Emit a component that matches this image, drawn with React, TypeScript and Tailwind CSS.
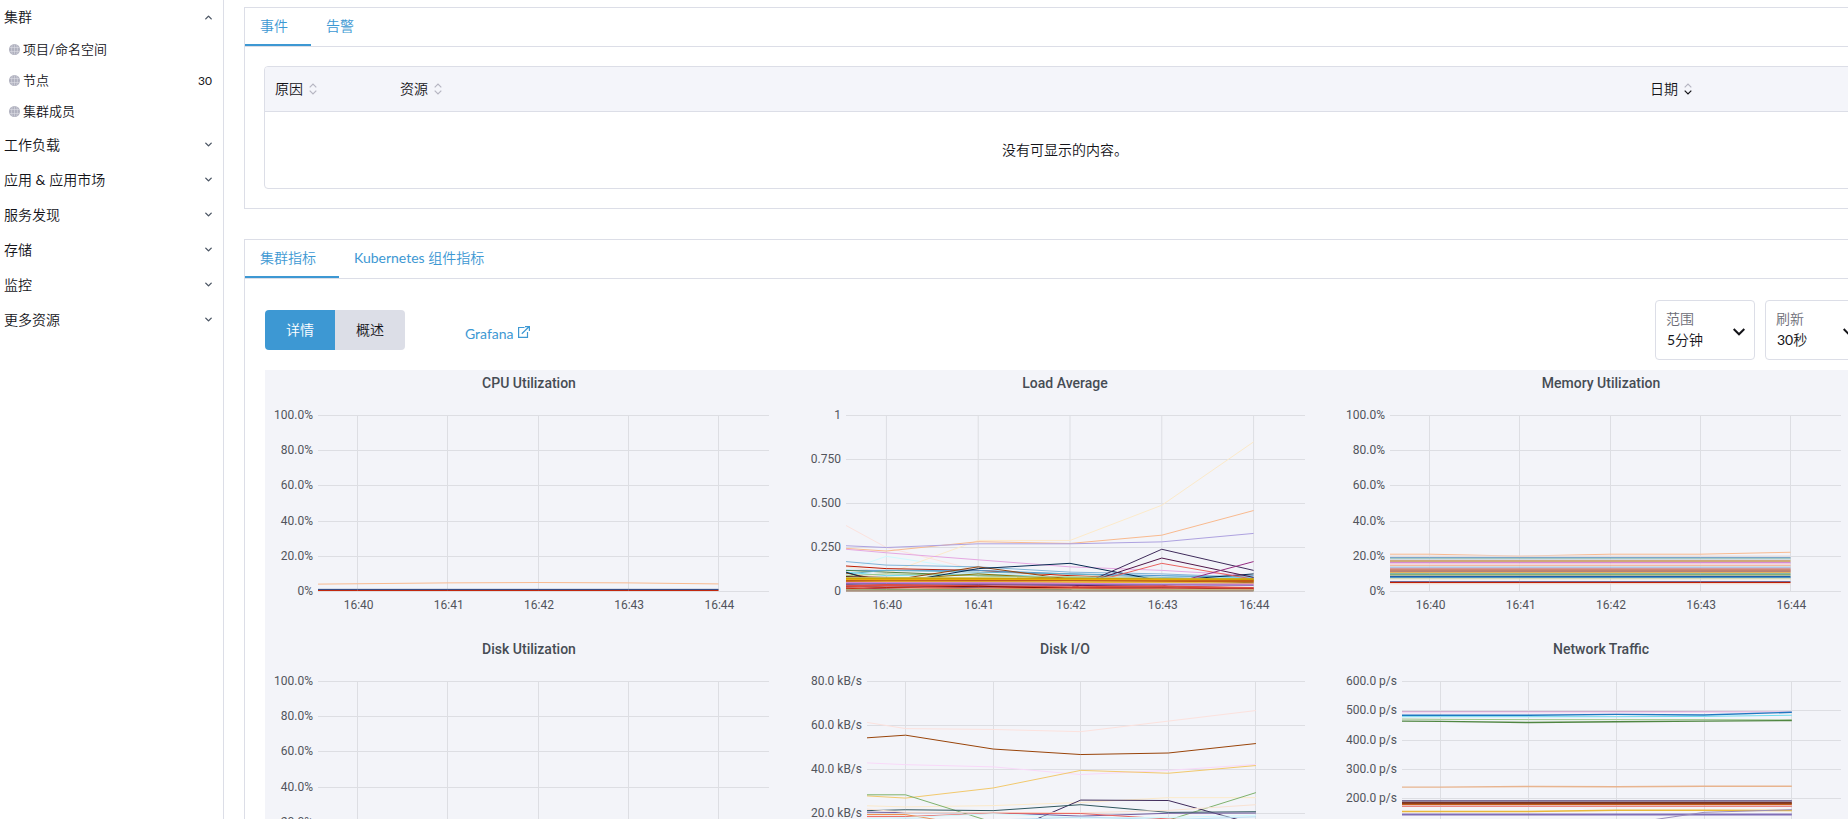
import { ChevronDown, ChevronUp } from "lucide-react";

type Series = { c: string; v: number[]; w?: number };
type ChartSpec = {
  title: string;
  labels: string[];
  max: number;
  gutter: string;
  series: Series[];
};

const TIMES = ["16:40", "16:41", "16:42", "16:43", "16:44"];
const TICKS = [88, 288, 488, 688, 888];
const POINTS = [0, ...TICKS];
const PLOT_HEIGHT = 176;
const PERCENT = ["100.0%", "80.0%", "60.0%", "40.0%", "20.0%", "0%"];

const flat = (c: string, v: number, w = 1): Series => ({ c, v: [v, v, v, v, v, v], w });

const CHARTS: ChartSpec[] = [
  {
    title: "CPU Utilization",
    labels: PERCENT,
    max: 100,
    gutter: "w-[53px]",
    series: [
      { c: "#f9ba8f", v: [4.2, 4.4, 4.9, 5.1, 4.9, 4.3] },
      flat("#bf1b00", 0.6),
      flat("#1f3a78", 1.2),
    ],
  },
  {
    title: "Load Average",
    labels: ["1", "0.750", "0.500", "0.250", "0"],
    max: 1,
    gutter: "w-[45px]",
    series: [
      { c: "#fce2de", v: [0.375, 0.25, 0.12, 0.09, 0.08, 0.07] },
      { c: "#cffaff", v: [0.12, 0.2, 0.12, 0.1, 0.09, 0.08] },
      { c: "#f9e2d2", v: [0.14, 0.11, 0.09, 0.1, 0.07, 0.05] },
      { c: "#fceaca", v: [0.07, 0.1, 0.29, 0.29, 0.49, 0.85] },
      { c: "#f9ba8f", v: [0.245, 0.23, 0.283, 0.273, 0.32, 0.46] },
      { c: "#aea2e0", v: [0.26, 0.25, 0.271, 0.271, 0.282, 0.33] },
      { c: "#e5a8e2", v: [0.24, 0.22, 0.18, 0.14, 0.12, 0.09] },
      { c: "#82b5d8", v: [0.17, 0.15, 0.14, 0.11, 0.1, 0.08] },
      { c: "#bf1b00", v: [0.145, 0.13, 0.12, 0.09, 0.07, 0.06] },
      { c: "#5195ce", v: [0.12, 0.12, 0.12, 0.1, 0.09, 0.08] },
      { c: "#508642", v: [0.12, 0.11, 0.09, 0.08, 0.07, 0.07] },
      { c: "#64b0c8", v: [0.1, 0.12, 0.11, 0.1, 0.08, 0.09] },
      { c: "#70dbed", v: [0.11, 0.09, 0.1, 0.08, 0.07, 0.08] },
      { c: "#9ac48a", v: [0.09, 0.1, 0.09, 0.08, 0.075, 0.07] },
      { c: "#99440a", v: [0.105, 0.06, 0.14, 0.07, 0.06, 0.07] },
      { c: "#967302", v: [0.06, 0.065, 0.1, 0.07, 0.06, 0.065] },
      { c: "#052b51", v: [0.11, 0.04, 0.13, 0.16, 0.06, 0.1] },
      { c: "#3f2b5b", v: [0.03, 0.03, 0.02, 0.01, 0.24, 0.12] },
      { c: "#511749", v: [0.02, 0.03, 0.02, 0.02, 0.19, 0.08] },
      { c: "#ea6460", v: [0.03, 0.04, 0.03, 0.02, 0.16, 0.07] },
      { c: "#962d82", v: [0.01, 0.02, 0.03, 0.02, 0.03, 0.17] },
      { c: "#58140c", v: [0.085, 0.08, 0.075, 0.07, 0.06, 0.05] },
      { c: "#b7dbab", v: [0.08, 0.08, 0.08, 0.085, 0.075, 0.07] },
      { c: "#e0f9d7", v: [0.07, 0.07, 0.08, 0.07, 0.06, 0.06] },
      { c: "#cca300", v: [0.074, 0.074, 0.074, 0.072, 0.07, 0.07], w: 2 },
      { c: "#e5ac0e", v: [0.066, 0.065, 0.066, 0.066, 0.066, 0.06], w: 2 },
      { c: "#c15c17", v: [0.06, 0.058, 0.06, 0.06, 0.058, 0.06], w: 2 },
      { c: "#eab839", v: [0.05, 0.052, 0.052, 0.054, 0.05, 0.045], w: 2 },
      { c: "#badff4", v: [0.04, 0.05, 0.048, 0.045, 0.045, 0.04] },
      { c: "#d683ce", v: [0.048, 0.048, 0.048, 0.044, 0.04, 0.04], w: 2 },
      { c: "#806eb7", v: [0.045, 0.045, 0.043, 0.04, 0.038, 0.035], w: 1 },
      { c: "#6d1f62", v: [0.038, 0.036, 0.038, 0.035, 0.03, 0.02], w: 1 },
      { c: "#e24d42", v: [0.03, 0.035, 0.03, 0.024, 0.028, 0.02], w: 2 },
      { c: "#890f02", v: [0.024, 0.02, 0.03, 0.018, 0.02, 0.014], w: 1 },
      { c: "#f29191", v: [0.02, 0.026, 0.018, 0.015, 0.015, 0.012] },
      { c: "#bf1b00", v: [0.016, 0.022, 0.016, 0.018, 0.014, 0.012] },
      { c: "#f4d598", v: [0.012, 0.012, 0.015, 0.014, 0.012, 0.01] },
      { c: "#629e51", v: [0.008, 0.01, 0.01, 0.008, 0.008, 0.006] },
      flat("#a8927f", 0.004, 2),
    ],
  },
  {
    title: "Memory Utilization",
    labels: PERCENT,
    max: 100,
    gutter: "w-[53px]",
    series: [
      { c: "#f9ba8f", v: [21.2, 21.2, 20.1, 21.2, 21.2, 22.3] },
      flat("#e9dfe0", 20.2),
      flat("#5f93bd", 19.2),
      flat("#7fb9a7", 18.5),
      flat("#dedde8", 18),
      flat("#d0a878", 17.3, 2),
      flat("#c85fc0", 16.3),
      flat("#efc8e0", 15.7),
      flat("#f3d6d0", 15.2),
      flat("#f2a47c", 14.6),
      flat("#b9dff0", 14),
      flat("#92a5d9", 13.4),
      flat("#d98680", 12.7, 2),
      flat("#c98a68", 12, 2),
      flat("#ba8078", 11.3, 2),
      flat("#e3b450", 10.7),
      flat("#6aa8a0", 10.1),
      flat("#629e51", 9.5),
      flat("#a9a988", 8.9),
      flat("#1f5fa8", 8.3, 2),
      flat("#70bfd8", 7.7),
      flat("#e0d9a0", 7.2),
      flat("#6f6494", 5.7),
      flat("#bf1b00", 5.1),
      flat("#f3d3c4", 4.4),
    ],
  },
  {
    title: "Disk Utilization",
    labels: PERCENT,
    max: 100,
    gutter: "w-[53px]",
    series: [],
  },
  {
    title: "Disk I/O",
    labels: ["80.0 kB/s", "60.0 kB/s", "40.0 kB/s", "20.0 kB/s", "0 B/s"],
    max: 80,
    gutter: "w-[66px]",
    series: [
      { c: "#fce2de", v: [61.4, 58.6, 58.2, 57.2, 62, 66.8] },
      { c: "#99440a", v: [54.4, 55.6, 49.3, 46.8, 47.5, 51.8] },
      { c: "#f9d9f9", v: [43, 42.2, 41.2, 37.7, 39.6, 42.3] },
      { c: "#f2c96d", v: [28, 27, 31.6, 39.6, 38.3, 41.8] },
      { c: "#fceaca", v: [23.5, 23, 23.6, 25, 27.2, 27.2] },
      { c: "#7eb26d", v: [28.5, 28.5, 16, 14, 17, 29.5] },
      { c: "#3f2b5b", v: [10, 10, 9, 26.1, 25.9, 15] },
      { c: "#2f575e", v: [21.3, 21.7, 21.3, 24, 20.5, 20.8] },
      { c: "#705da0", v: [20.6, 20.4, 20.4, 18.8, 20.1, 20.2] },
      { c: "#f9e2d2", v: [22, 20.5, 20.5, 20.3, 21.4, 24] },
      { c: "#ea6460", v: [18.6, 18.6, 20.1, 20, 17.5, 16] },
      { c: "#ef843c", v: [19.5, 19.5, 13, 12, 12, 12] },
      { c: "#cffaff", v: [17.6, 18.2, 19.9, 18, 18.2, 19.2] },
      { c: "#badff4", v: [17, 17.5, 17, 18.4, 17.2, 18.5] },
    ],
  },
  {
    title: "Network Traffic",
    labels: ["600.0 p/s", "500.0 p/s", "400.0 p/s", "300.0 p/s", "200.0 p/s", "100.0 p/s", "0 p/s"],
    max: 600,
    gutter: "w-[65px]",
    series: [
      flat("#c99ac4", 497),
      { c: "#f4d5f0", v: [493, 493, 493, 493, 495, 497] },
      { c: "#1f78c1", v: [485, 485, 485, 488, 486, 495], w: 1.4 },
      { c: "#70dbed", v: [480, 480, 480, 480, 481, 485] },
      { c: "#9ac48a", v: [472, 471, 470, 470, 470, 469] },
      { c: "#508642", v: [465, 464, 460, 463, 465, 467], w: 1.4 },
      { c: "#e8b48f", v: [240, 240, 242, 241, 243, 243], w: 1.4 },
      flat("#c15c17", 182, 2),
      flat("#7d3423", 187, 2),
      flat("#584477", 193, 1.4),
      flat("#e24d42", 175),
      { c: "#eab839", v: [157, 157, 157, 161, 161, 160], w: 1.4 },
      flat("#806eb7", 147, 2),
      { c: "#9a8cba", v: [60, 70, 80, 110, 154, 163] },
    ],
  },
];

function Chart({ title, labels, max, gutter, series }: ChartSpec) {
  return (
    <section className="flex h-[266px] min-w-0 flex-col pr-6 font-[Roboto,sans-serif] text-[#52545c]">
      <h3 className="-mr-6 h-[37px] pt-[3px] text-center text-sm font-medium leading-5 text-[#464c54]">{title}</h3>
      <div className="flex">
        <div className={`flex h-[192px] shrink-0 flex-col justify-between pr-[5px] text-right text-xs leading-4 whitespace-nowrap ${gutter}`}>
          {labels.map((l) => (
            <span key={l}>{l}</span>
          ))}
        </div>
        <div className="min-w-0 flex-1 pt-2">
          <svg
            className="block h-[177px] w-full overflow-visible"
            viewBox="0 0 1000 177"
            preserveAspectRatio="none"
            fill="none"
            role="img"
            aria-label={title}
          >
            <g stroke="#dddee3" shapeRendering="crispEdges">
              {labels.map((l, i) => {
                const y = Math.round((i * PLOT_HEIGHT) / (labels.length - 1)) + 0.5;
                return <path key={l} d={`M0 ${y}H1000`} vectorEffect="non-scaling-stroke" />;
              })}
              {TICKS.map((x) => (
                <path key={x} d={`M${x} 0V176`} vectorEffect="non-scaling-stroke" />
              ))}
            </g>
            {series.map((s, i) => (
              <polyline
                key={i}
                stroke={s.c}
                strokeWidth={s.w ?? 1}
                vectorEffect="non-scaling-stroke"
                points={s.v.map((v, j) => `${POINTS[j]},${(PLOT_HEIGHT + 0.5 - (v / max) * PLOT_HEIGHT).toFixed(2)}`).join(" ")}
              />
            ))}
          </svg>
          <div className="mr-[1%] -ml-[1%] flex pt-[5px] text-center text-xs leading-4">
            {TIMES.map((t) => (
              <span key={t} className="w-1/5">
                {t}
              </span>
            ))}
          </div>
        </div>
      </div>
    </section>
  );
}

function Globe() {
  return (
    <svg className="size-[11px] shrink-0" viewBox="0 0 11 11" aria-hidden="true">
      <circle cx="5.5" cy="5.5" r="5.5" fill="#b0b1bf" />
      <path d="M0.5 3.5H10.5M0.5 7.5H10.5M5.5 0.5V10.5M3.3 1C2.3 4 2.3 7 3.3 10M7.7 1C8.7 4 8.7 7 7.7 10" stroke="#e4e4ea" strokeWidth="0.5" fill="none" />
    </svg>
  );
}

function SortIcon({ down = "#b6b6c2" }: { down?: string }) {
  return (
    <svg className="h-3 w-2" viewBox="0 0 8 12" fill="none" strokeWidth="1.2" aria-hidden="true">
      <path d="M0.7 4.3L4 1L7.3 4.3" stroke="#b6b6c2" />
      <path d="M0.7 7.7L4 11L7.3 7.7" stroke={down} />
    </svg>
  );
}

function SortHeader({ label, down }: { label: string; down?: string }) {
  return (
    <button type="button" className="flex items-center gap-[6px] font-normal">
      {label}
      <SortIcon down={down} />
    </button>
  );
}

const CHILDREN = [
  { label: "项目/命名空间" },
  { label: "节点", count: 30 },
  { label: "集群成员" },
];
const GROUPS = ["工作负载", "应用 & 应用市场", "服务发现", "存储", "监控", "更多资源"];

function Sidebar() {
  return (
    <nav className="w-56 shrink-0 border-r border-[#dcdee7] pr-[9px]">
      <button type="button" className="flex h-[34px] w-full items-center justify-between pl-1 text-left">
        集群
        <ChevronUp className="size-[11px] text-[#4b5563]" strokeWidth={3} />
      </button>
      <ul className="text-[13px]">
        {CHILDREN.map((c) => (
          <li key={c.label}>
            <a href="#" className="flex h-[31px] items-center gap-[3px] pl-[9px]">
              <Globe />
              <span className="flex-1">{c.label}</span>
              {c.count && <span className="pr-[2px] text-xs">{c.count}</span>}
            </a>
          </li>
        ))}
      </ul>
      {GROUPS.map((g) => (
        <button key={g} type="button" className="flex h-[35px] w-full items-center justify-between pl-1 text-left">
          {g}
          <ChevronDown className="size-[11px] text-[#4b5563]" strokeWidth={3} />
        </button>
      ))}
    </nav>
  );
}

function Tabs({ items }: { items: string[] }) {
  return (
    <div role="tablist" className="flex border-b border-[#dcdee7] text-[#3d98d3]">
      {items.map((t, i) => (
        <button
          key={t}
          type="button"
          role="tab"
          aria-selected={i === 0}
          className={`h-[38px] border-b-2 pr-[23px] pl-[15px] ${i === 0 ? "border-[#3d98d3]" : "border-transparent"}`}
        >
          {t}
        </button>
      ))}
    </div>
  );
}

function Picker({ id, label, value }: { id: string; label: string; value: string }) {
  return (
    <div className="relative h-[60px] w-[100px] rounded border border-[#dcdee7] bg-white">
      <label htmlFor={id} className="pointer-events-none absolute top-2 left-[10px] leading-5 text-[#6c6c76]">
        {label}
      </label>
      <select id={id} defaultValue={value} className="size-full appearance-none bg-transparent pt-5 pl-[11px] leading-5">
        <option>{value}</option>
      </select>
      <svg className="pointer-events-none absolute top-[27px] right-[9px] h-2 w-3" viewBox="0 0 12 8" fill="none" stroke="#141419" strokeWidth="2" aria-hidden="true">
        <path d="M0.7 1L6 6.3L11.3 1" />
      </svg>
    </div>
  );
}

export default function App() {
  return (
    <div className="h-screen overflow-hidden bg-white font-[Lato,'Noto_Sans_CJK_SC_DemiLight','Noto_Sans_CJK_SC',sans-serif] text-sm text-[#141419]">
      <div className="flex w-[calc(100%+58px)]">
        <Sidebar />
        <main className="min-w-0 flex-1 px-5 pt-[7px]">
          <section className="mb-[30px] border border-[#dcdee7]">
            <Tabs items={["事件", "告警"]} />
            <div className="px-[19px] py-[19px]">
              <div className="overflow-hidden rounded border border-[#dcdee7]">
                <table className="w-full table-fixed text-left">
                  <thead className="bg-[#f4f5fa]">
                    <tr className="h-11 border-b border-[#dcdee7]">
                      <th className="w-[125px] pl-[10px]">
                        <SortHeader label="原因" />
                      </th>
                      <th className="pl-[10px]">
                        <SortHeader label="资源" />
                      </th>
                      <th className="w-[225px] pl-[10px]">
                        <SortHeader label="日期" down="#141419" />
                      </th>
                    </tr>
                  </thead>
                  <tbody>
                    <tr className="h-[77px]">
                      <td colSpan={3} className="text-center">
                        没有可显示的内容。
                      </td>
                    </tr>
                  </tbody>
                </table>
              </div>
            </div>
          </section>

          <section className="border border-[#dcdee7]">
            <Tabs items={["集群指标", "Kubernetes 组件指标"]} />
            <div className="px-5 pt-[21px] pb-5">
              <div className="mb-[10px] flex h-[60px] items-center">
                <div className="flex h-10 overflow-hidden rounded">
                  <button type="button" className="w-[70px] bg-[#3d98d3] text-white">
                    详情
                  </button>
                  <button type="button" className="w-[70px] bg-[#dcdee7]">
                    概述
                  </button>
                </div>
                <a href="#" className="ml-[60px] flex items-center gap-1 pt-2 text-[#3d98d3]">
                  Grafana
                  <svg className="mb-1 size-3" viewBox="0 0 12 12" fill="none" stroke="currentColor" strokeWidth="1.2" aria-hidden="true">
                    <path d="M6.5 1.5H0.6V11.4H9.5V6" />
                    <path d="M3.8 7.8L11 0.8M7 0.6H11.4V5" />
                  </svg>
                </a>
                <div className="ml-auto flex gap-[10px]">
                  <Picker id="range" label="范围" value="5分钟" />
                  <Picker id="refresh" label="刷新" value="30秒" />
                </div>
              </div>
              <div className="grid grid-cols-3 gap-x-2 bg-[#f3f4f9]">
                {CHARTS.map((c) => (
                  <Chart key={c.title} {...c} />
                ))}
              </div>
            </div>
          </section>
        </main>
      </div>
    </div>
  );
}
